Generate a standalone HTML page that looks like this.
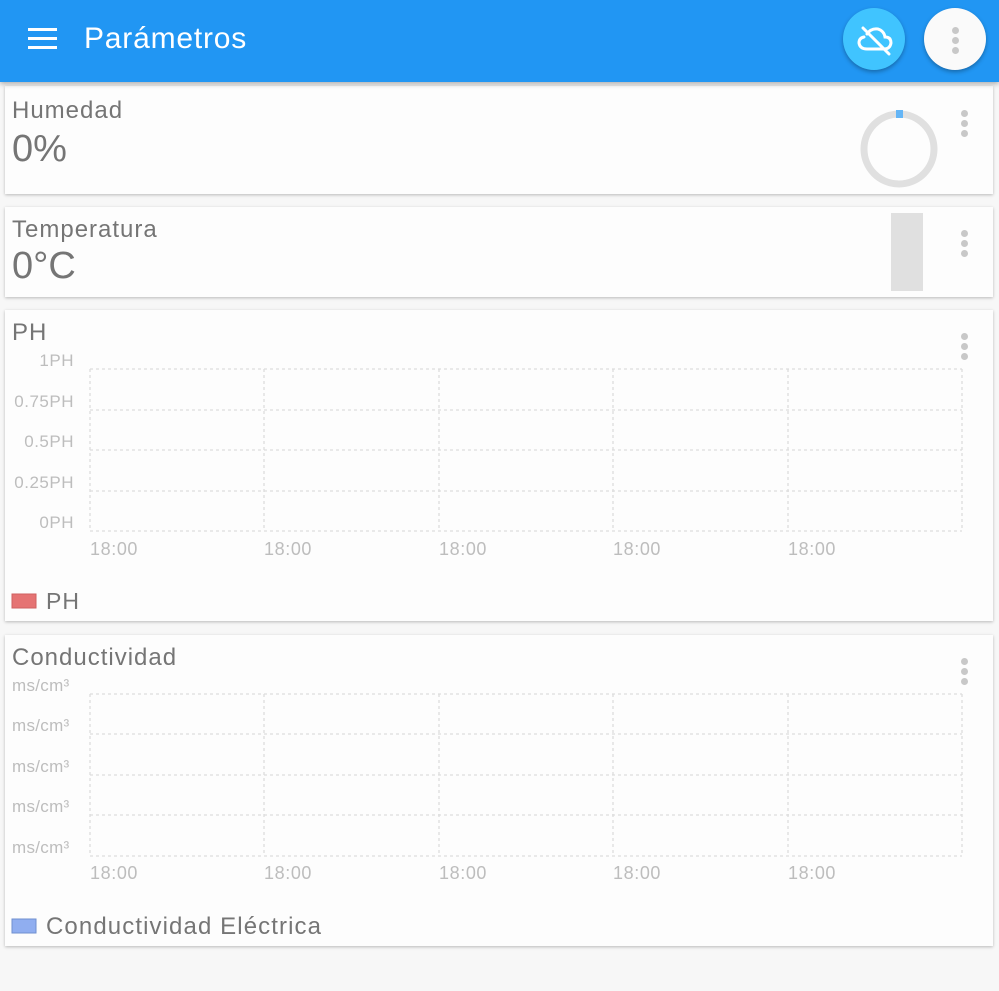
<!DOCTYPE html>
<html><head><meta charset="utf-8"><style>
*{margin:0;padding:0;box-sizing:border-box}
body{width:999px;height:991px;background:#f7f7f7;font-family:"Liberation Sans",sans-serif;position:relative;overflow:hidden}
.hdr{position:absolute;left:0;top:0;width:999px;height:82px;background:#2196f3;box-shadow:0 2px 5px rgba(0,0,0,.3);z-index:2}
.card{position:absolute;left:5px;width:988px;background:#fdfdfd;box-shadow:0 1px 3px rgba(0,0,0,.25)}
.t{position:absolute;left:7px;color:#757575;font-size:24px;letter-spacing:1px}
.v{position:absolute;left:7px;color:#757575;font-size:38px}
.dots{position:absolute;width:6px}
.dots i{display:block;width:7px;height:7px;border-radius:50%;background:#c8c8c8;margin-bottom:3px}
svg text{font-family:"Liberation Sans",sans-serif}
</style></head><body>
<div class="hdr">
<div style="position:absolute;left:28px;top:28px;width:29px">
<div style="height:3px;background:#fff;margin-bottom:6px"></div><div style="height:3px;background:#fff;margin-bottom:6px"></div><div style="height:3px;background:#fff"></div></div>
<div style="position:absolute;left:84px;top:22px;color:#fff;font-size:30px;letter-spacing:0.8px">Parámetros</div>
<div style="position:absolute;left:843px;top:8px;width:62px;height:62px;border-radius:50%;background:#40c4ff;box-shadow:0 2px 4px rgba(0,0,0,.3)">
<svg width="62" height="62" viewBox="0 0 62 62"><path d="M24 26 Q28 20 35 21 Q41 23 42 29 Q48 29 48 35 Q47 41 41 41 L24 41 Q17 41 16 35 Q16 30 21 29" fill="none" stroke="#fff" stroke-width="3" stroke-linecap="round"/><line x1="20" y1="20" x2="46" y2="46" stroke="#fff" stroke-width="3" stroke-linecap="round"/></svg></div>
<div style="position:absolute;left:924px;top:8px;width:62px;height:62px;border-radius:50%;background:#fafafa;box-shadow:0 2px 4px rgba(0,0,0,.3)">
<div class="dots" style="left:28px;top:19px"><i></i><i></i><i></i></div></div>
</div>

<div class="card" style="top:86px;height:108px">
<div class="t" style="top:11px">Humedad</div><div class="v" style="top:42px">0%</div>
<svg style="position:absolute;left:853px;top:22px" width="82" height="82"><circle cx="41" cy="41" r="35" fill="none" stroke="#e0e0e0" stroke-width="7"/><rect x="38" y="2" width="7" height="8" fill="#64b5f6"/></svg>
<div class="dots" style="left:956px;top:24px"><i></i><i></i><i></i></div>
</div>

<div class="card" style="top:207px;height:90px">
<div class="t" style="top:9px">Temperatura</div><div class="v" style="top:38px">0°C</div>
<div style="position:absolute;left:886px;top:6px;width:32px;height:78px;background:#e0e0e0"></div>
<div class="dots" style="left:956px;top:23px"><i></i><i></i><i></i></div>
</div>

<div class="card" style="top:310px;height:311px">
<div class="t" style="top:9px">PH</div>
<div class="dots" style="left:956px;top:23px"><i></i><i></i><i></i></div>
<svg style="position:absolute;left:0;top:0" width="988" height="311">
<g stroke="#ddd" stroke-dasharray="3,3" stroke-width="1.3" fill="none">
<path d="M85 59H957M85 100H957M85 140H957M85 181H957M85 221H957M85 59V221M259 59V221M434 59V221M608 59V221M783 59V221M957 59V221"/></g>
<g fill="#bdbdbd" font-size="17" text-anchor="end" letter-spacing="0.5">
<text x="69" y="56">1PH</text><text x="69" y="97">0.75PH</text><text x="69" y="137">0.5PH</text><text x="69" y="178">0.25PH</text><text x="69" y="218">0PH</text></g>
<g fill="#bdbdbd" font-size="18" letter-spacing="0.6"><text x="85" y="245">18:00</text><text x="259" y="245">18:00</text><text x="434" y="245">18:00</text><text x="608" y="245">18:00</text><text x="783" y="245">18:00</text></g>
<rect x="7" y="284" width="24" height="14" fill="#e57373" stroke="#d06060"/>
<text x="41" y="299" fill="#757575" font-size="23" letter-spacing="1">PH</text>
</svg>
</div>

<div class="card" style="top:635px;height:311px">
<div class="t" style="top:9px">Conductividad</div>
<div class="dots" style="left:956px;top:23px"><i></i><i></i><i></i></div>
<svg style="position:absolute;left:0;top:0" width="988" height="311">
<g stroke="#ddd" stroke-dasharray="3,3" stroke-width="1.3" fill="none">
<path d="M85 59H957M85 99H957M85 140H957M85 180H957M85 221H957M85 59V221M259 59V221M434 59V221M608 59V221M783 59V221M957 59V221"/></g>
<g fill="#bdbdbd" font-size="17" letter-spacing="0.3">
<text x="7" y="56">ms/cm³</text><text x="7" y="96">ms/cm³</text><text x="7" y="137">ms/cm³</text><text x="7" y="177">ms/cm³</text><text x="7" y="218">ms/cm³</text></g>
<g fill="#bdbdbd" font-size="18" letter-spacing="0.6"><text x="85" y="244">18:00</text><text x="259" y="244">18:00</text><text x="434" y="244">18:00</text><text x="608" y="244">18:00</text><text x="783" y="244">18:00</text></g>
<rect x="7" y="284" width="24" height="14" fill="#90aef0" stroke="#7090d0"/>
<text x="41" y="299" fill="#757575" font-size="24" letter-spacing="1.1">Conductividad Eléctrica</text>
</svg>
</div>
</body></html>
